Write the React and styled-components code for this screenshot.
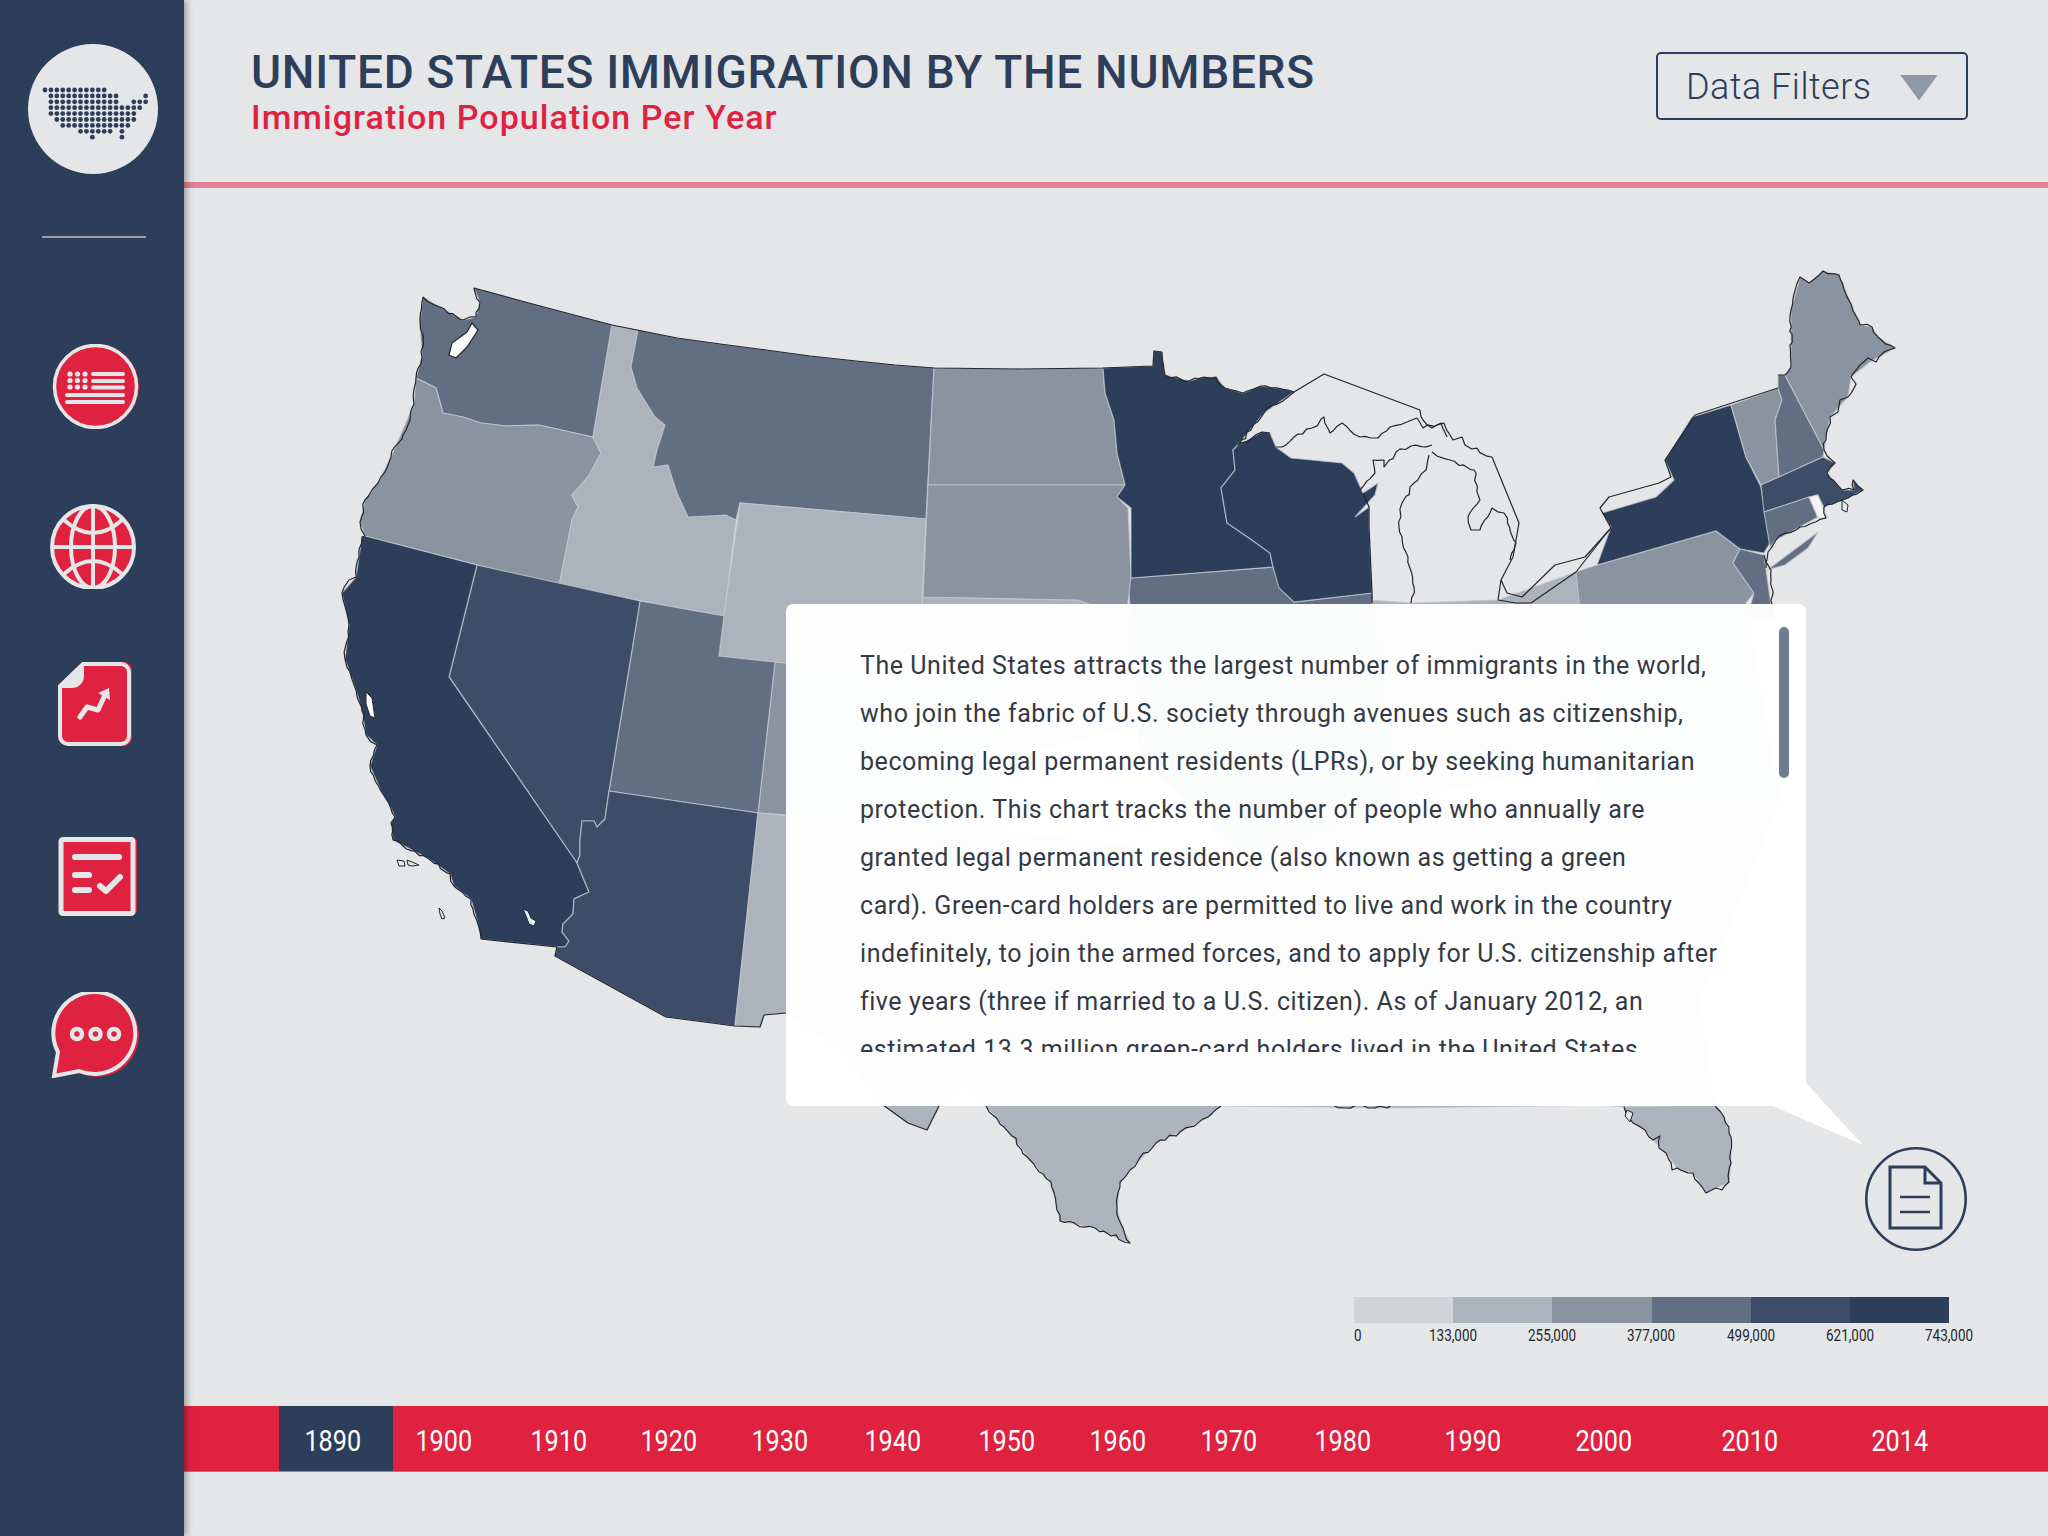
import React from 'react'
import styled, { createGlobalStyle } from 'styled-components'

const NAVY = '#2C3E5A'
const RED = '#DF2240'
const LIGHT = '#E5E6E8'
const SHADES = ['#D0D3D7', '#ACB3BC', '#8A93A0', '#626F83', '#3D4D68', '#2C3E5A']

const GlobalStyle = createGlobalStyle`
  html, body { margin: 0; padding: 0; }
  body { background: ${LIGHT}; font-family: Roboto, "Liberation Sans", sans-serif; }
`

const Page = styled.div`
  display: flex;
  width: 2048px;
  height: 1536px;
  overflow: hidden;
  background: ${LIGHT};
`
const Sidebar = styled.nav`
  position: relative;
  z-index: 2;
  flex: 0 0 184px;
  display: flex;
  flex-direction: column;
  align-items: center;
  background: ${NAVY};
  box-shadow: 3px 0 6px rgba(0, 0, 0, .3);
`
const Logo = styled.div`
  width: 130px;
  height: 130px;
  margin-top: 44px;
  margin-left: 2px;
  border-radius: 50%;
  background: ${LIGHT};
  display: flex;
  align-items: center;
  justify-content: center;
`
const LogoMark = styled.svg`
  width: 110px;
  height: 60px;
  margin: 16px 0 0 7px;
  fill: ${NAVY};
`
const Divider = styled.div`
  width: 104px;
  height: 2px;
  margin: 62px 0 0 3px;
  background: #9a9ea6;
`
const NavIcon = styled.svg`
  display: block;
  width: 100px;
  margin-top: ${p => p.$top}px;
  flex: none;
`
const Main = styled.main`
  flex: 1;
  display: flex;
  flex-direction: column;
  min-width: 0;
`
const Header = styled.header`
  height: 182px;
  flex: none;
  display: flex;
  justify-content: space-between;
  align-items: flex-start;
  padding: 0 80px 0 67px;
  border-bottom: 6px solid #E08392;
`
const Titles = styled.div`
  padding-top: 44px;
`
const Title = styled.h1`
  margin: 0;
  font-size: 46px;
  line-height: 56px;
  font-weight: 500;
  letter-spacing: .7px;
  color: ${NAVY};
  white-space: nowrap;
`
const Subtitle = styled.h2`
  margin: -2px 0 0;
  font-size: 34px;
  line-height: 38px;
  font-weight: 500;
  letter-spacing: 1.05px;
  color: ${RED};
  white-space: nowrap;
`
const FilterButton = styled.button`
  margin-top: 52px;
  width: 312px;
  height: 68px;
  box-sizing: border-box;
  display: flex;
  align-items: center;
  padding: 2px 28px 0;
  border: 2px solid ${NAVY};
  border-radius: 5px;
  background: transparent;
  color: ${NAVY};
  font-family: inherit;
  font-size: 36px;
  font-weight: 300;
  letter-spacing: .5px;
`
const Caret = styled.span`
  margin-left: auto;
  margin-top: 1px;
  width: 38px;
  height: 26px;
  background: #8F99A5;
  clip-path: polygon(0 0, 100% 0, 50% 100%);
`
const Canvas = styled.section`
  position: relative;
  height: 1218px;
  flex: none;
`
const MapSvg = styled.svg`
  display: block;
  width: 1864px;
  height: 1218px;
`
const Card = styled.article`
  position: absolute;
  left: 602px;
  top: 416px;
  width: 1020px;
  height: 502px;
  box-sizing: border-box;
  padding: 38px 0 0 74px;
  border-radius: 7px;
  background: rgba(255, 255, 255, .975);

  &::after {
    content: '';
    position: absolute;
    left: 987px;
    top: 478px;
    width: 90px;
    height: 63px;
    background: #fff;
    clip-path: polygon(32px 0, 90px 63px, 0 24px);
  }
`
const CardText = styled.div`
  height: 410px;
  overflow: hidden;
`
const CardLine = styled.p`
  margin: 0;
  height: 48px;
  font-size: 25px;
  line-height: 48px;
  font-weight: 400;
  letter-spacing: .55px;
  color: #343a44;
  white-space: nowrap;
`
const Scrollbar = styled.div`
  position: absolute;
  top: 23px;
  right: 17px;
  width: 10px;
  height: 151px;
  border-radius: 5px;
  background: #6F7B8E;
`
const DocButton = styled.svg`
  position: absolute;
  left: 1681px;
  top: 959px;
  width: 102px;
  height: 104px;
`
const Legend = styled.div`
  position: absolute;
  left: 1170px;
  top: 1109px;
  width: 595px;
`
const LegendBar = styled.div`
  display: flex;
  height: 26px;
`
const LegendSwatch = styled.div`
  flex: 1;
  background: ${p => p.$color};
`
const LegendLabels = styled.div`
  display: flex;
  justify-content: space-between;
  margin-top: 3px;
`
const LegendLabel = styled.span`
  width: 0;
  display: flex;
  justify-content: ${p => (p.$start ? 'flex-start' : 'center')};
  font-size: 16px;
  line-height: 20px;
  white-space: nowrap;
  color: #23262c;
  transform: scaleX(.84);
  transform-origin: ${p => (p.$start ? 'left' : 'center')};
`
const Timeline = styled.div`
  height: 66px;
  flex: none;
  display: flex;
  align-items: stretch;
  padding-left: 95px;
  background: ${RED};
  border-bottom: 1px solid #e4606f;
  box-sizing: border-box;
`
const Year = styled.div`
  display: flex;
  align-items: center;
  justify-content: center;
  box-sizing: border-box;
  width: ${p => (p.$active ? 114 : 60)}px;
  margin-left: ${p => p.$gap}px;
  padding: 3px ${p => (p.$active ? 6 : 0)}px 0 0;
  background: ${p => (p.$active ? NAVY : 'transparent')};
  color: #fff;
`
const YearLabel = styled.span`
  display: block;
  font-size: 30px;
  transform: scaleX(.84);
`

const LINES = [
  'The United States attracts the largest number of immigrants in the world,',
  'who join the fabric of U.S. society through avenues such as citizenship,',
  'becoming legal permanent residents (LPRs), or by seeking humanitarian',
  'protection. This chart tracks the number of people who annually are',
  'granted legal permanent residence (also known as getting a green',
  'card). Green-card holders are permitted to live and work in the country',
  'indefinitely, to join the armed forces, and to apply for U.S. citizenship after',
  'five years (three if married to a U.S. citizen). As of January 2012, an',
  'estimated 13.3 million green-card holders lived in the United States.',
]

const YEARS = [
  [1890, 0], [1900, 21], [1910, 55], [1920, 50], [1930, 51], [1940, 53], [1950, 54],
  [1960, 51], [1970, 51], [1980, 54], [1990, 70], [2000, 71], [2010, 86], [2014, 90],
]

const LEGEND = ['0', '133,000', '255,000', '377,000', '499,000', '621,000', '743,000']

// dot grid of the logo: row -> runs of column indexes
const DOT_ROWS = [
  [[0, 10]],
  [[1, 12], [17, 17]],
  [[1, 12], [15, 17]],
  [[1, 16]],
  [[1, 15]],
  [[2, 15]],
  [[3, 14]],
  [[6, 11], [13, 13]],
  [[8, 8], [13, 13]],
]

const STATES = [
  // hidden under the card, only a tint gets through
  [SHADES[1], '922,597 1078,600 1131,610 1160,720 1000,760 900,820 758,813 775,662 926,680'],
  [SHADES[2], '775,662 1000,672 1000,830 758,813'],
  [SHADES[3], '1128,578 1273,567 1282,590 1294,602 1372,593 1400,800 1250,860 1140,760'],
  [SHADES[1], '1372,600 1411,603 1498,600 1576,572 1600,760 1400,800'],
  [SHADES[2], '1576,572 1597,565 1716,531 1740,549 1733,563 1754,593 1746,603 1780,800 1600,800'],
  [SHADES[1], '758,813 1000,830 1250,860 1400,800 1780,800 1700,1000 1715,1105 1624,1107 1600,1105 1403,1108 1221,1106 1225,1000 1100,950 880,890 786,1013 764,1015 760,1027 735,1026'],
  // texas and big bend
  [SHADES[1], '786,1013 840,1050 883,1105 908,1123 927,1130 940,1104 960,1085 986,1106 1012,1136 1030,1160 1051,1182 1056,1203 1060,1221 1095,1228 1130,1243 1121,1224 1117,1208 1120,1182 1130,1170 1156,1143 1180,1132 1208,1117 1221,1106 1225,1000 1100,950 880,890'],
  // florida
  [SHADES[1], '1624,1107 1633,1123 1645,1130 1653,1140 1666,1153 1677,1168 1693,1173 1702,1187 1706,1193 1729,1182 1731,1163 1731,1137 1724,1117 1715,1105'],
  // west
  [SHADES[3], '474,288 540,306 612,325 593,437 539,425 507,426 481,423 463,417 443,413 436,388 416,378 422,357 420,320 423,297 440,307 463,320 476,317 480,302'],
  [SHADES[2], '593,437 601,453 588,477 572,495 578,507 572,520 559,586 365,536 360,522 365,500 378,483 391,457 414,404 416,378 436,388 443,413 463,417 481,423 507,426 539,425'],
  [SHADES[1], '612,325 638,330 631,367 637,388 655,417 665,425 657,450 653,467 668,465 677,493 688,517 726,515 736,520 724,616 559,586 572,520 578,507 572,495 588,477 601,453 593,437'],
  [SHADES[3], '638,330 677,338 720,344 766,350 810,356 856,361 895,365 934,368 926,519 740,503 736,520 726,515 688,517 677,493 668,465 653,467 657,450 665,425 655,417 637,388 631,367'],
  [SHADES[1], '740,503 926,519 922,600 926,680 775,662 719,656 724,616'],
  [SHADES[3], '640,601 724,616 719,656 775,662 758,813 609,791'],
  [SHADES[4], '477,565 640,601 609,791 605,819 597,827 594,821 582,821 580,840 580,855 577,863 450,678 449,677'],
  [SHADES[5], '365,536 477,565 449,677 577,863 589,892 574,899 573,914 563,924 562,932 569,941 565,947 557,947 481,939 478,924 471,899 454,886 450,874 429,859 393,840 391,823 395,817 390,806 381,791 370,766 377,745 366,735 362,711 356,690 345,659 349,625 342,593 356,577 362,537'],
  [SHADES[4], '609,791 758,813 735,1026 666,1017 555,956 557,947 565,947 569,941 562,932 563,924 573,914 574,899 589,892 577,863 580,855 580,840 582,821 594,821 597,827 605,819'],
  [SHADES[1], '758,813 800,817 786,1013 764,1015 760,1027 735,1026'],
  // plains and lakes
  [SHADES[2], '934,368 1020,369 1103,368 1105,393 1114,420 1117,453 1125,485 928,485'],
  [SHADES[2], '928,485 1125,485 1117,497 1128,508 1131,577 1127,610 1090,604 1078,600 923,597'],
  [SHADES[5], '1103,368 1153,366 1154,351 1162,352 1165,375 1189,381 1204,377 1216,377 1225,388 1243,393 1261,386 1288,390 1294,392 1264,413 1238,445 1233,450 1235,470 1221,488 1227,523 1252,540 1270,553 1273,567 1131,578 1131,508 1117,497 1125,485 1117,453 1114,420 1105,393'],
  [SHADES[5], '1238,445 1262,432 1270,433 1276,447 1291,458 1342,463 1354,473 1363,493 1378,483 1375,495 1355,517 1369,507 1369,527 1372,593 1294,602 1279,588 1273,567 1270,553 1252,540 1227,523 1221,488 1235,470 1233,450'],
  // northeast
  [SHADES[5], '1692,417 1731,405 1746,457 1761,487 1770,543 1764,553 1740,549 1716,531 1597,565 1611,527 1602,513 1656,497 1674,480 1665,460'],
  [SHADES[3], '1740,549 1764,555 1773,620 1746,620 1754,593 1733,563'],
  [SHADES[2], '1731,405 1778,388 1782,400 1775,420 1779,477 1761,485 1746,457'],
  [SHADES[3], '1778,388 1778,375 1785,375 1824,450 1823,457 1779,477 1775,420 1782,400'],
  [SHADES[2], '1785,375 1791,367 1791,310 1800,277 1809,283 1823,271 1839,275 1860,325 1872,327 1878,337 1895,348 1870,362 1851,377 1848,397 1830,417 1824,450'],
  [SHADES[4], '1761,485 1779,477 1823,457 1835,463 1827,473 1842,490 1854,490 1853,480 1863,490 1848,498 1824,507 1817,495 1764,512'],
  [SHADES[3], '1764,512 1809,497 1818,517 1776,540 1770,547'],
  ['#f4f5f6', '1809,497 1818,495 1827,517 1818,518'],
  [SHADES[3], '1767,570 1790,553 1818,532 1808,548 1785,565'],
]

// straight or smooth lines, drawn as they are
const BORDERS = [
  '474,288 540,306 612,325 677,338 720,344 766,350 810,356 856,361 895,365 934,368 1020,369 1103,368 1153,366 1154,351 1162,352',
  '481,939 557,947 555,956 666,1017 735,1026 760,1027 764,1015 786,1013',
  '1294,392 1324,374 1420,410',
  '1492,457 1519,523 1513,557 1501,580 1507,593 1522,597 1555,565 1585,557 1611,528',
  '1501,580 1498,600 1516,603 1531,603 1576,572 1609,530',
  '1611,528 1600,508 1609,497 1659,483 1671,477 1665,460 1695,415 1778,388',
  '1363,493 1369,507 1369,527 1372,593 1372,603',
  '883,1105 908,1123 927,1130 940,1104',
]

// coast lines, roughened by roughen() below so they read as a real shore
const SHORES = [
  '1162,352 1165,375 1189,381 1204,377 1216,377 1225,388 1243,393 1261,386 1288,390 1294,392 1264,413 1238,445 1262,432 1270,433',
  '423,297 440,307 463,320 476,317 480,302 474,288',
  '423,297 420,320 423,340 422,357 416,378 414,404 408,425 391,457 385,472 378,483 372,490 365,500 360,522 365,536 362,537 356,577 349,580 342,593 345,606 349,625 345,659 350,672 356,690 362,711 366,735 377,745 370,766 381,791 390,806 395,817 391,823 393,840 429,859 450,874 454,886 471,899 478,924 481,939',
  '986,1106 1012,1136 1030,1160 1051,1182 1056,1203 1060,1221 1095,1228 1130,1243 1121,1224 1117,1208 1120,1182 1130,1170 1156,1143 1180,1132 1208,1117 1221,1106',
  '1331,1104 1345,1108 1362,1105 1375,1108 1403,1104',
  '1624,1107 1633,1123 1645,1130 1653,1140 1660,1136 1659,1148 1666,1153 1672,1170 1677,1168 1693,1173 1702,1187 1706,1193 1716,1188 1722,1190 1729,1182 1731,1163 1731,1137 1724,1117 1715,1105',
  '1420,410 1423,420 1432,428 1444,423 1453,440 1462,437 1465,445 1492,457',
  '1276,447 1282,447 1294,437 1312,428 1324,417 1330,433 1342,423 1360,437 1378,438 1390,427 1417,418 1423,428 1441,423 1447,437',
  '1432,445 1411,446 1396,452 1384,467 1384,460 1373,460 1375,473 1360,490',
  '1429,455 1426,470 1414,483 1402,503 1399,527 1408,557 1414,587 1411,603',
  '1432,452 1450,460 1474,470 1480,500 1468,517 1471,530 1480,530 1492,508 1504,513 1516,543 1510,560',
  '1778,375 1785,375 1791,367 1791,310 1800,277 1809,283 1823,271 1839,275 1860,325 1872,327 1878,337 1895,348 1884,352 1876,362 1868,358 1851,377 1856,384 1848,397 1840,400 1838,412 1830,417 1826,440 1824,450 1835,463 1827,473 1842,490 1854,490 1853,480 1863,490 1848,498 1824,507 1826,518 1800,527 1776,540 1768,552 1766,568',
  '1764,555 1771,570 1773,620',
]

const PUGET = '472,323 478,330 467,347 456,358 449,355 452,343 467,332'
const ISLANDS = [
  ['397,860 404,861 405,866 399,866', 'none'],
  ['407,860 412,862 419,865 412,866 408,865', 'none'],
  ['439,908 442,911 445,918 442,919 440,914', 'none'],
  ['366,692 372,698 375,718 370,716 366,704', '#fff'],
  ['523,909 528,911 531,918 536,921 534,926 529,924 526,916', '#d9f0f5'],
  ['1627,1110 1633,1113 1630,1122 1625,1116', LIGHT],
  ['1842,500 1848,505 1847,512 1842,510', 'none'],
]

// breaks each segment in short steps and nudges them, same result on every render
function roughen(points) {
  const pts = points.split(' ').map(p => p.split(',').map(Number))
  const out = []
  let seed = 7
  const wobble = () => {
    seed = (seed * 31 + 11) % 97
    return (seed / 97 - .5) * 3.4
  }
  pts.forEach(([x, y], i) => {
    out.push(x + ',' + y)
    if (i === pts.length - 1) return
    const [nx, ny] = pts[i + 1]
    const steps = Math.floor(Math.hypot(nx - x, ny - y) / 5)
    for (let s = 1; s < steps; s++) {
      const t = s / steps
      out.push((x + (nx - x) * t + wobble()).toFixed(1) + ',' + (y + (ny - y) * t + wobble()).toFixed(1))
    }
  })
  return out.join(' ')
}

function LogoDots() {
  const dots = []
  DOT_ROWS.forEach((runs, row) => runs.forEach(([from, to]) => {
    for (let col = from; col <= to; col++) {
      dots.push(<circle key={row + '-' + col} cx={col * 5.92} cy={row * 5.9} r="2.4" />)
    }
  }))
  return <LogoMark viewBox="-3 -3 110 60">{dots}</LogoMark>
}

function UsMap() {
  return (
    <MapSvg viewBox="184 188 1864 1218">
      {STATES.map(([fill, pts], i) => (
        <polygon key={i} points={pts} fill={fill} stroke="#c3c7cd" strokeOpacity=".75" strokeWidth="1.2" />
      ))}
      <polygon points={PUGET} fill="#fff" stroke="#23262c" strokeWidth="1.2" />
      <g fill="none" stroke="#23262c" strokeWidth="1.2" strokeLinejoin="round">
        {BORDERS.map(pts => <polyline key={pts} points={pts} />)}
        {SHORES.map(pts => <polyline key={pts} points={roughen(pts)} />)}
      </g>
      {ISLANDS.map(([pts, fill]) => (
        <polygon key={pts} points={pts} fill={fill} stroke="#23262c" strokeWidth="1" />
      ))}
    </MapSvg>
  )
}

function Nav() {
  return (
    <>
      <Logo><LogoDots /></Logo>
      <Divider />
      <NavIcon $top={106} height="85" viewBox="42 344 100 85">
        <circle cx="96.5" cy="386.5" r="42.5" fill={RED} />
        <circle cx="95.5" cy="386.5" r="41" fill={RED} stroke={LIGHT} strokeWidth="3.5" />
        <g fill={LIGHT}>
          {[374, 380.5, 387].map(y => [70, 77.5, 85].map(x => (
            <circle key={x + '-' + y} cx={x} cy={y} r="2.6" />
          )))}
        </g>
        <g stroke={LIGHT} strokeWidth="4" strokeLinecap="round">
          <path d="M93 374H123M93 381H123M93 387.5H123M67 395H123M67 402H123" />
        </g>
      </NavIcon>
      <NavIcon $top={75} height="85" viewBox="42 504 100 85">
        <circle cx="94" cy="547" r="42" fill={RED} />
        <g fill="none" stroke={LIGHT} strokeWidth="4">
          <circle cx="93" cy="547" r="41" fill={RED} />
          <ellipse cx="93" cy="547" rx="22" ry="41" />
          <path d="M93 506V588M52 547H134" />
          <path d="M64 520Q93 546 122 520M64 574Q93 548 122 574" />
        </g>
      </NavIcon>
      <NavIcon $top={73} height="84" viewBox="42 662 100 84">
        <path d="M83 662H124a8 8 0 0 1 8 8V738a8 8 0 0 1 -8 8H69a8 8 0 0 1 -8 -8V686Z" fill={RED} />
        <path d="M83 664H121a8 8 0 0 1 8 8V736a8 8 0 0 1 -8 8H68a8 8 0 0 1 -8 -8V686Z" fill={RED} stroke={LIGHT} strokeWidth="4" />
        <path d="M84 662L58 686V688H72a12 12 0 0 0 12 -12Z" fill={LIGHT} />
        <path d="M80 717L87 707L98 710L104 697" fill="none" stroke={LIGHT} strokeWidth="5" strokeLinecap="round" strokeLinejoin="round" />
        <path d="M98 693L109 688L110 700Z" fill={LIGHT} />
      </NavIcon>
      <NavIcon $top={91} height="79" viewBox="42 837 100 79">
        <rect x="59" y="837" width="78" height="78" rx="5" fill={RED} />
        <rect x="61" y="839.5" width="72" height="74" rx="2" fill={RED} stroke={LIGHT} strokeWidth="5" />
        <path d="M75 857H119M75 875H89M75 890H89" stroke={LIGHT} strokeWidth="6" strokeLinecap="round" />
        <path d="M100 886L106 891L120 877" fill="none" stroke={LIGHT} strokeWidth="6" strokeLinecap="round" strokeLinejoin="round" />
      </NavIcon>
      <NavIcon $top={76} height="86" viewBox="42 992 100 86">
        <circle cx="97" cy="1035" r="42" fill={RED} />
        <path d="M58 1052A41 41 0 1 1 79 1071L54 1076Z" fill={RED} stroke={LIGHT} strokeWidth="4" strokeLinejoin="miter" />
        <g fill={RED} stroke={LIGHT} strokeWidth="4.5">
          <circle cx="77" cy="1034" r="5" />
          <circle cx="95.5" cy="1034" r="5" />
          <circle cx="114" cy="1034" r="5" />
        </g>
      </NavIcon>
    </>
  )
}

export default function App() {
  return (
    <Page>
      <GlobalStyle />
      <Sidebar><Nav /></Sidebar>
      <Main>
        <Header>
          <Titles>
            <Title>UNITED STATES IMMIGRATION BY THE NUMBERS</Title>
            <Subtitle>Immigration Population Per Year</Subtitle>
          </Titles>
          <FilterButton>Data Filters<Caret /></FilterButton>
        </Header>
        <Canvas>
          <UsMap />
          <Card>
            <CardText>
              {LINES.map(line => <CardLine key={line}>{line}</CardLine>)}
            </CardText>
            <Scrollbar />
          </Card>
          <DocButton viewBox="0 0 102 104">
            <g fill="none" stroke={NAVY} strokeWidth="2.6">
              <ellipse cx="51" cy="52" rx="49.7" ry="50.7" />
              <path d="M25 20H60L76 36V81H25Z" strokeWidth="3" />
              <path d="M60 20V36H76" strokeWidth="3" />
              <path d="M35 50H65M35 65H65" />
            </g>
          </DocButton>
          <Legend>
            <LegendBar>
              {SHADES.map(c => <LegendSwatch key={c} $color={c} />)}
            </LegendBar>
            <LegendLabels>
              {LEGEND.map((l, i) => <LegendLabel key={l} $start={i === 0}>{l}</LegendLabel>)}
            </LegendLabels>
          </Legend>
        </Canvas>
        <Timeline>
          {YEARS.map(([y, gap]) => (
            <Year key={y} $gap={gap} $active={y === 1890}><YearLabel>{y}</YearLabel></Year>
          ))}
        </Timeline>
      </Main>
    </Page>
  )
}
